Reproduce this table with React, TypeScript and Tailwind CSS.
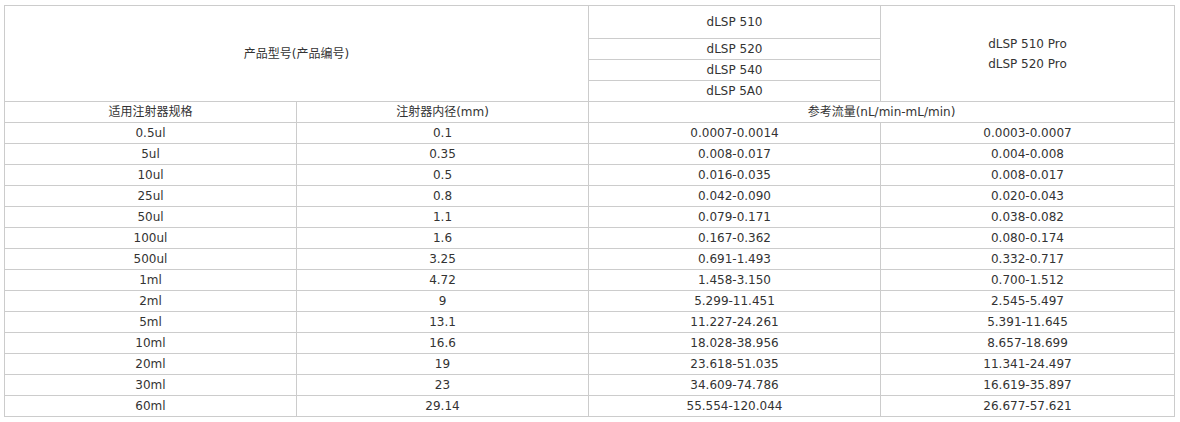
const rows: [string, string, string, string][] = [
  ['0.5ul', '0.1', '0.0007-0.0014', '0.0003-0.0007'],
  ['5ul', '0.35', '0.008-0.017', '0.004-0.008'],
  ['10ul', '0.5', '0.016-0.035', '0.008-0.017'],
  ['25ul', '0.8', '0.042-0.090', '0.020-0.043'],
  ['50ul', '1.1', '0.079-0.171', '0.038-0.082'],
  ['100ul', '1.6', '0.167-0.362', '0.080-0.174'],
  ['500ul', '3.25', '0.691-1.493', '0.332-0.717'],
  ['1ml', '4.72', '1.458-3.150', '0.700-1.512'],
  ['2ml', '9', '5.299-11.451', '2.545-5.497'],
  ['5ml', '13.1', '11.227-24.261', '5.391-11.645'],
  ['10ml', '16.6', '18.028-38.956', '8.657-18.699'],
  ['20ml', '19', '23.618-51.035', '11.341-24.497'],
  ['30ml', '23', '34.609-74.786', '16.619-35.897'],
  ['60ml', '29.14', '55.554-120.044', '26.677-57.621'],
]

const cell = 'border border-[#cccccc] text-center align-middle p-0 leading-[20px]'

export default function App() {
  return (
    <div className="w-[1180px] h-[422px] bg-white pl-[4px] pt-[5px] text-[#333333] text-[12px] font-[family-name:'DejaVu_Sans','Noto_Sans_CJK_SC',sans-serif]">
      <table className="border-collapse w-[1170px] table-fixed">
        <colgroup>
          <col className="w-[292px]" />
          <col className="w-[292px]" />
          <col className="w-[292px]" />
          <col className="w-[294px]" />
        </colgroup>
        <tbody>
          <tr className="h-[33px]">
            <td className={cell} colSpan={2} rowSpan={4}>
              产品型号(产品编号)
            </td>
            <td className={cell}>dLSP 510</td>
            <td className={cell} rowSpan={4}>
              dLSP 510 Pro
              <br />
              dLSP 520 Pro
            </td>
          </tr>
          <tr className="h-[21px]">
            <td className={cell}>dLSP 520</td>
          </tr>
          <tr className="h-[21px]">
            <td className={cell}>dLSP 540</td>
          </tr>
          <tr className="h-[21px]">
            <td className={cell}>dLSP 5A0</td>
          </tr>
          <tr className="h-[21px]">
            <td className={cell}>适用注射器规格</td>
            <td className={cell}>注射器内径(mm)</td>
            <td className={cell} colSpan={2}>
              参考流量(nL/min-mL/min)
            </td>
          </tr>
          {rows.map((r) => (
            <tr key={r[0]} className="h-[21px]">
              {r.map((v, i) => (
                <td key={i} className={cell}>
                  {v}
                </td>
              ))}
            </tr>
          ))}
        </tbody>
      </table>
    </div>
  )
}
